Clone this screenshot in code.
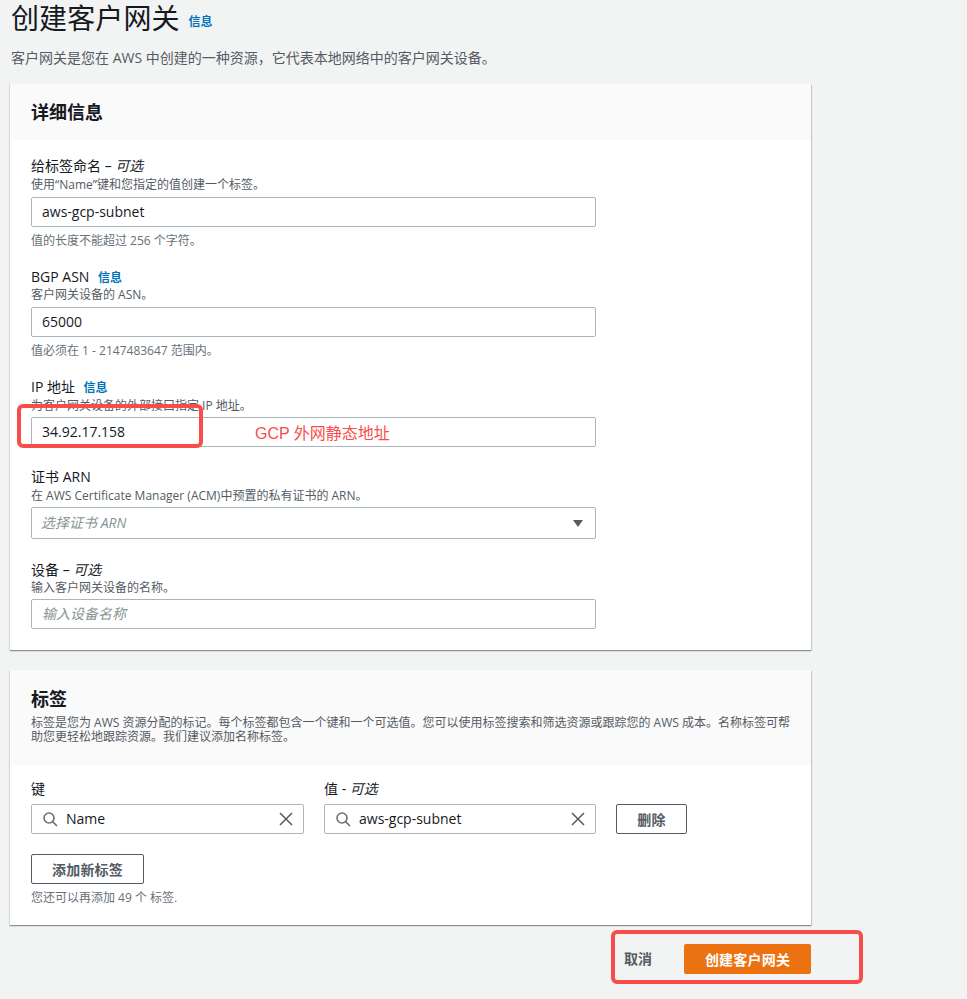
<div class="page">
  <header class="head">
    <h1>创建客户网关</h1>
    <a class="info big" href="#info">信息</a>
  </header>
  <p class="lead">客户网关是您在 AWS 中创建的一种资源，它代表本地网络中的客户网关设备。</p>

  <section class="card first">
    <div class="card-head plain">
      <h2>详细信息</h2>
    </div>
    <div class="card-body">
      <div class="field f1">
        <div class="label">给标签命名 – <i>可选</i></div>
        <div class="desc">使用“Name”键和您指定的值创建一个标签。</div>
        <div class="input">aws-gcp-subnet</div>
        <div class="hint">值的长度不能超过 256 个字符。</div>
      </div>
      <div class="field f2">
        <div class="label">BGP ASN <a class="info" href="#info">信息</a></div>
        <div class="desc">客户网关设备的 ASN。</div>
        <div class="input">65000</div>
        <div class="hint">值必须在 1 - 2147483647 范围内。</div>
      </div>
      <div class="field f3">
        <div class="label">IP 地址 <a class="info" href="#info">信息</a></div>
        <div class="desc">为客户网关设备的外部接口指定 IP 地址。</div>
        <div class="input">34.92.17.158</div>
      </div>
      <div class="field f4">
        <div class="label">证书 ARN</div>
        <div class="desc">在 AWS Certificate Manager (ACM)中预置的私有证书的 ARN。</div>
        <div class="input select">
          <i class="ph">选择证书 ARN</i>
          <svg width="12" height="9" viewBox="0 0 12 9"><path d="M1 1h10L6 8z" fill="#545b64" /></svg>
        </div>
      </div>
      <div class="field f5">
        <div class="label">设备 – <i>可选</i></div>
        <div class="desc">输入客户网关设备的名称。</div>
        <div class="input"><i class="ph">输入设备名称</i></div>
      </div>
    </div>
  </section>

  <section class="card second">
    <div class="card-head tall">
      <h2>标签</h2>
      <p>标签是您为 AWS 资源分配的标记。每个标签都包含一个键和一个可选值。您可以使用标签搜索和筛选资源或跟踪您的 AWS 成本。名称标签可帮助您更轻松地跟踪资源。我们建议添加名称标签。</p>
    </div>
    <div class="tags">
      <div class="tag-row">
        <div class="tag-col">
          <div class="label">键</div>
          <div class="input search">
            <svg width="16" height="16" viewBox="0 0 16 16" fill="none" stroke="#687078" stroke-width="1.6"><circle cx="7" cy="7" r="5" /><path d="M10.6 10.6L15 15" /></svg>
            <span>Name</span>
            <svg class="x" width="14" height="14" viewBox="0 0 14 14" fill="none" stroke="#545b64" stroke-width="1.5"><path d="M1 1l12 12M13 1L1 13" /></svg>
          </div>
        </div>
        <div class="tag-col">
          <div class="label">值 - <i>可选</i></div>
          <div class="input search">
            <svg width="16" height="16" viewBox="0 0 16 16" fill="none" stroke="#687078" stroke-width="1.6"><circle cx="7" cy="7" r="5" /><path d="M10.6 10.6L15 15" /></svg>
            <span>aws-gcp-subnet</span>
            <svg class="x" width="14" height="14" viewBox="0 0 14 14" fill="none" stroke="#545b64" stroke-width="1.5"><path d="M1 1l12 12M13 1L1 13" /></svg>
          </div>
        </div>
        <button class="btn del">删除</button>
      </div>
      <button class="btn add">添加新标签</button>
      <div class="hint">您还可以再添加 49 个 标签.</div>
    </div>
  </section>

  <footer class="actions">
    <span class="cancel">取消</span>
    <button class="primary">创建客户网关</button>
  </footer>

  <!-- red markup drawn over the screenshot -->
  <div class="mark mark-ip"></div>
  <div class="mark-text">GCP 外网静态地址</div>
  <div class="mark mark-foot"></div>
</div>

<style>
  :global(body) {
    margin: 0;
    background: #f2f3f3;
  }

  .page {
    position: relative;
    height: 999px;
    overflow: hidden;
    box-sizing: border-box;
    background: #f2f3f3;
    color: #16191f;
    font-family: "Open Sans", "Noto Sans CJK SC", sans-serif;
    font-size: 14px;
    line-height: 20px;
  }

  .head {
    display: flex;
    align-items: flex-start;
    gap: 9px;
    padding-left: 11px;
    height: 38px;
  }

  h1 {
    margin: 0;
    font-size: 28px;
    line-height: 36px;
    font-weight: 400;
    letter-spacing: 0.1px;
  }

  .info {
    color: #0073bb;
    font-size: 12px;
    font-weight: 700;
    text-decoration: none;
    margin-left: 5px;
  }

  .info.big {
    margin: 12px 0 0;
    line-height: 20px;
  }

  .lead {
    margin: 10px 0 0 11px;
    color: #545b64;
    font-size: 14px;
    line-height: 20px;
  }

  .card {
    margin-left: 10px;
    width: 801px;
    background: #fff;
    box-shadow: 0 1px 1px 0 rgba(0, 28, 36, 0.3), 1px 1px 1px 0 rgba(0, 28, 36, 0.15), -1px 1px 1px 0 rgba(0, 28, 36, 0.08);
  }

  .first {
    margin-top: 16px;
    height: 566px;
  }

  .second {
    margin-top: 20px;
    height: 255px;
  }

  .card-head {
    background: #fafafa;
    padding: 0 21px;
    box-sizing: border-box;
  }

  .plain {
    height: 56px;
    padding-top: 16px;
  }

  .tall {
    height: 95px;
    padding-top: 17px;
  }

  h2 {
    margin: 0;
    font-size: 18px;
    line-height: 24px;
    font-weight: 700;
  }

  .tall p {
    margin: 5px 0 0;
    font-size: 12px;
    line-height: 14px;
    color: #545b64;
  }

  .card-body {
    padding: 16px 21px 0;
  }

  .field .label,
  .tag-col .label {
    line-height: 20px;
    font-size: 14px;
  }

  .desc {
    font-size: 12px;
    line-height: 15px;
    color: #545b64;
  }

  .hint {
    font-size: 12px;
    line-height: 15px;
    color: #687078;
    margin-top: 6px;
  }

  .input {
    box-sizing: border-box;
    width: 565px;
    height: 30px;
    margin-top: 4px;
    padding: 0 10px;
    display: flex;
    align-items: center;
    background: #fff;
    border: 1px solid #aab7b8;
    border-radius: 2px;
    font-size: 14px;
  }

  .select {
    height: 32px;
    justify-content: space-between;
    padding-left: 9px;
    padding-right: 11px;
  }

  .ph {
    color: #879596;
  }

  .f1 .desc { margin-top: 1px; }
  .f1 .input { margin-top: 5px; }
  .f2 { margin-top: 19px; }
  .f2 .desc { margin-top: -1px; }
  .f2 .input { margin-top: 5px; }
  .f3 { margin-top: 19px; }
  .f4 { margin-top: 20px; }
  .f4 .desc { margin-top: 1px; }
  .f5 { margin-top: 21px; }
  .f5 .input { margin-top: 4px; }

  .tags {
    padding: 14px 21px 0;
  }

  .tag-row {
    display: flex;
    align-items: flex-end;
  }

  .tag-col + .tag-col {
    margin-left: 20px;
  }

  .tag-col .input {
    width: 273px;
    padding: 0 10px;
    gap: 8px;
    margin-top: 5px;
  }

  .tag-col:nth-child(2) .input {
    width: 272px;
  }

  .tag-col .x {
    margin-left: auto;
  }

  .btn {
    box-sizing: border-box;
    height: 30px;
    background: #fff;
    border: 1px solid #545b64;
    border-radius: 2px;
    color: #545b64;
    font: 700 14px "Open Sans", "Noto Sans CJK SC", sans-serif;
    letter-spacing: 0.2px;
    padding: 0;
  }

  .del {
    width: 71px;
    margin-left: 20px;
  }

  .add {
    display: block;
    width: 113px;
    margin-top: 20px;
  }

  .tags .hint {
    margin-top: 6px;
  }

  .actions {
    display: flex;
    align-items: center;
    width: 811px;
    justify-content: flex-end;
    gap: 32px;
    margin-top: 19px;
  }

  .cancel {
    color: #545b64;
    font-weight: 700;
    font-size: 14px;
  }

  .primary {
    width: 127px;
    height: 30px;
    border: 0;
    border-radius: 2px;
    background: #ec7211;
    color: #fff;
    font: 700 14px "Open Sans", "Noto Sans CJK SC", sans-serif;
    letter-spacing: 0.2px;
    padding: 0;
  }

  .mark {
    position: absolute;
    box-sizing: border-box;
    border: 4px solid #f94d4b;
    border-radius: 6px;
  }

  .mark-ip {
    left: 17px;
    top: 404px;
    width: 186px;
    height: 44px;
  }

  .mark-foot {
    left: 611px;
    top: 930px;
    width: 252px;
    height: 54px;
  }

  .mark-text {
    position: absolute;
    left: 255px;
    top: 424px;
    color: #f94d4b;
    font-family: "Liberation Sans", "Noto Sans CJK SC", sans-serif;
    font-size: 16px;
    line-height: 20px;
  }
</style>
